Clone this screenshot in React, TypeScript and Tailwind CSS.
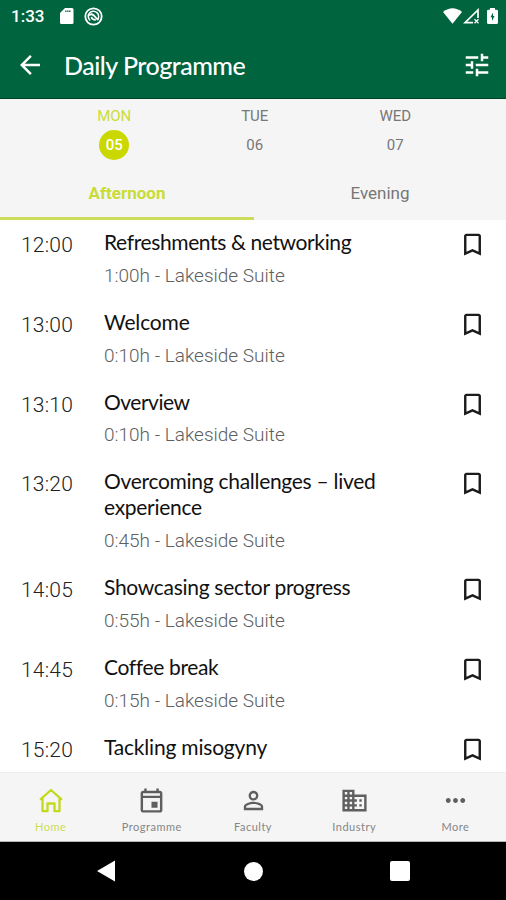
import { type ReactNode } from "react";
import { MdArrowBack, MdBookmarkBorder, MdBusiness, MdMoreHoriz, MdOutlineEvent, MdPersonOutline, MdTune } from "react-icons/md";

const days = [
  { name: "MON", date: "05", active: true },
  { name: "TUE", date: "06", active: false },
  { name: "WED", date: "07", active: false },
];

type SessionData = { time: string; title: string[]; length?: string; fit: string };

const sessions: SessionData[] = [
  { time: "12:00", title: ["Refreshments & networking"], length: "1:00h", fit: "tracking-[-0.38px]" },
  { time: "13:00", title: ["Welcome"], length: "0:10h", fit: "tracking-[-0.15px]" },
  { time: "13:10", title: ["Overview"], length: "0:10h", fit: "tracking-[-0.5px]" },
  { time: "13:20", title: ["Overcoming challenges – lived", "experience"], length: "0:45h", fit: "tracking-[-0.29px]" },
  { time: "14:05", title: ["Showcasing sector progress"], length: "0:55h", fit: "tracking-[-0.3px]" },
  { time: "14:45", title: ["Coffee break"], length: "0:15h", fit: "tracking-[-0.35px]" },
  { time: "15:20", title: ["Tackling misogyny"], fit: "tracking-[-0.2px]" },
];

function HomeIcon() {
  return (
    <svg width="29" height="29" viewBox="0 0 29 29" fill="none" stroke="currentColor" strokeWidth="2.300" strokeLinejoin="round">
      <path d="M4.800 13.200 15 4l10.200 9.200h-1.700v12h-5v-7.700h-7v7.700h-5v-12z" />
    </svg>
  );
}

function StatusBar() {
  return (
    <div className="flex h-8 items-center pl-[11px] pr-2 text-white">
      <span className="w-[49px] font-['Roboto',sans-serif] text-[17px] font-medium leading-8">1:33</span>
      <svg width="14" height="16" viewBox="0 0 14 16">
        <path d="M5 0h7q1.500 0 1.500 1.500v13q0 1.500-1.500 1.500H1.500Q0 16 0 14.500V5z" fill="currentColor" />
        <path d="M5.200 3.200h5.500" stroke="#00643f" strokeWidth="1.600" strokeDasharray="1.300 .7" />
      </svg>
      <svg className="ml-[10px]" width="19" height="19" viewBox="0 0 19 19" fill="none" stroke="currentColor">
        <circle cx="9.500" cy="9.500" r="8.200" strokeWidth="1.800" />
        <path d="M6.200 13.500A5.200 5.200 0 1 1 13.300 13" strokeWidth="1.500" />
        <path d="M5 8.500q2.200-2.300 4.500-.3l4.500 4.600M7.500 9.800q.5 3 4.300 3" strokeWidth="1.800" />
      </svg>
      <svg className="ml-auto" width="19" height="16" viewBox="0 0 19 16">
        <path d="M0 4Q9.500-3.500 19 4L9.500 15.800z" fill="currentColor" />
      </svg>
      <svg className="ml-[1px]" width="17" height="16" viewBox="0 0 17 16" fill="none" stroke="currentColor">
        <path d="M15 10V2L2 14.700h8" strokeWidth="1.700" />
        <path d="m11.500 11.200 4 4m0-4-4 4" strokeWidth="1.300" />
      </svg>
      <svg className="ml-[7px]" width="11" height="16" viewBox="0 0 11 16">
        <path d="M3 0h5v1.700h1.500Q11 1.700 11 3v11.500Q11 16 9.500 16h-8Q0 16 0 14.500V3q0-1.300 1.500-1.300H3z" fill="currentColor" />
        <path d="M6 4.500 3.500 9.300H5V13l2.500-4.900H6z" fill="#00643f" />
      </svg>
    </div>
  );
}

function Session({ time, title, length, fit }: SessionData) {
  return (
    <div className="flex shrink-0 items-start pb-[13px] pl-[21px] pr-[19px] pt-[10px]">
      <span className="mt-[2px] w-[83px] shrink-0 font-['Roboto',sans-serif] text-[21px] font-light leading-[26px] tracking-[0.2px] text-[#222]">{time}</span>
      <div className="-mt-px flex-1 whitespace-nowrap">
        <div className={`font-['Lato',sans-serif] text-[21px] leading-[25.8px] text-[#111] ${fit}`}>
          {title.map((line) => <div key={line}>{line}</div>)}
        </div>
        {length && (
          <div className="mt-[9px] font-['Roboto',sans-serif] text-[19px] font-light leading-[23px] text-[#606060]">{length} - Lakeside Suite</div>
        )}
      </div>
      <MdBookmarkBorder className="h-[29px] w-[29px] shrink-0 text-[#1b1b1b]" />
    </div>
  );
}

function NavItem({ icon, label, active }: { icon: ReactNode; label: string; active?: boolean }) {
  return (
    <div className={`flex flex-1 flex-col items-center pt-[13px] ${active ? "text-[#c2d91c]" : "text-[#5f5f5f]"}`}>
      {icon}
      <span className={`mt-[5px] font-['Lato',sans-serif] text-[11px] leading-[14px] tracking-[0.5px] ${active ? "text-[#cbdc55]" : "text-[#858585]"}`}>{label}</span>
    </div>
  );
}

export default function App() {
  return (
    <div className="flex h-[900px] w-[506px] flex-col overflow-hidden bg-white">
      <header className="h-[99px] shrink-0 border-b border-[#004522] bg-[#00643f]">
        <StatusBar />
        <div className="flex h-[66px] items-center pl-[15px] pr-[14px] text-white">
          <MdArrowBack className="h-[30px] w-[30px]" />
          <h1 className="ml-[19px] flex-1 font-['Lato',sans-serif] text-[25px] font-medium leading-[30px] tracking-[-0.5px]">Daily Programme</h1>
          <MdTune className="h-[30px] w-[30px]" />
        </div>
      </header>

      <div className="h-[121px] shrink-0 bg-[#f5f5f5] font-['Roboto',sans-serif]">
        <div className="flex h-[72px] pl-[44px] pt-[8px] text-[15px] text-[#777]">
          {days.map((day) => (
            <div key={day.name} className="flex w-[140.5px] flex-col items-center">
              <span className={`leading-[18px] ${day.active ? "text-[#cbdc3c]" : ""}`}>{day.name}</span>
              <span className={`mt-[5px] flex h-[30px] w-[30px] items-center justify-center rounded-full ${day.active ? "bg-[#cad800] font-medium text-white" : ""}`}>
                {day.date}
              </span>
            </div>
          ))}
        </div>
        <div className="flex h-[49px] text-[17px] leading-[44px]">
          <div className="w-[254px] border-b-[3px] border-[#cddc5b] text-center font-bold text-[#c9dc35]">Afternoon</div>
          <div className="flex-1 text-center text-[#777]">Evening</div>
        </div>
      </div>

      <main className="flex min-h-0 flex-1 flex-col overflow-hidden">
        {sessions.map((session) => <Session key={session.time} {...session} />)}
      </main>

      <nav className="flex h-[70px] shrink-0 border-y border-t-[#eee] border-b-[#b5b5b5] bg-[#f5f5f5]">
        <NavItem active icon={<HomeIcon />} label="Home" />
        <NavItem icon={<MdOutlineEvent size={29} />} label="Programme" />
        <NavItem icon={<MdPersonOutline size={29} />} label="Faculty" />
        <NavItem icon={<MdBusiness size={29} />} label="Industry" />
        <NavItem icon={<MdMoreHoriz size={29} />} label="More" />
      </nav>

      <div className="flex h-[58px] shrink-0 items-center justify-between bg-black px-[96px] text-white">
        <svg width="20" height="22" viewBox="0 0 20 22"><path d="M19 .5v21L1 11z" fill="currentColor" /></svg>
        <div className="h-[19px] w-[19px] rounded-full bg-white" />
        <div className="h-5 w-5 rounded-[2px] bg-white" />
      </div>
    </div>
  );
}
